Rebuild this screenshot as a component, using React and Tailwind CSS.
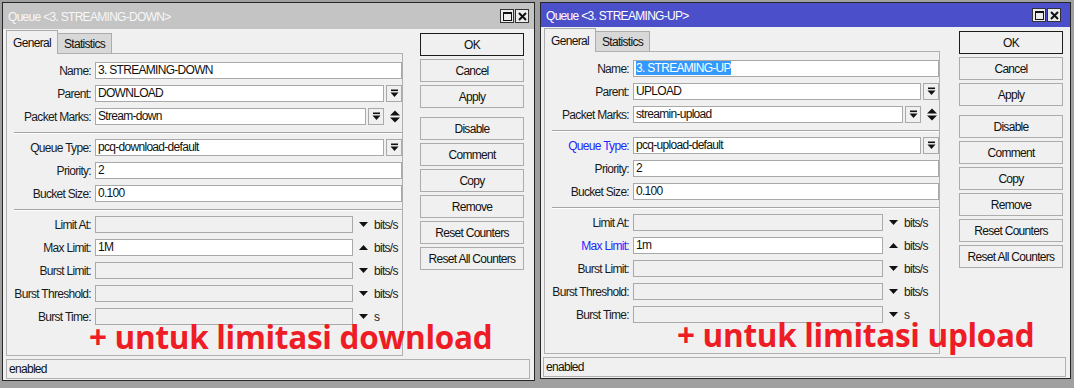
import React from "react";

function ComboIcon() {
  return (
    <svg width="9" height="9" viewBox="0 0 9 9">
      <rect x="1" y="0.5" width="7" height="1.6" fill="#111" />
      <polygon points="0.5,3.5 8.5,3.5 4.5,8" fill="#111" />
    </svg>
  );
}

function UpDownIcon() {
  return (
    <svg width="10" height="13" viewBox="0 0 10 13">
      <polygon points="0,5.5 10,5.5 5,0.5" fill="#111" />
      <polygon points="0,7.5 10,7.5 5,12.5" fill="#111" />
    </svg>
  );
}

function Tri({ up }) {
  return (
    <svg width="9" height="5" viewBox="0 0 9 5">
      {up ? <polygon points="0,5 9,5 4.5,0" fill="#111" /> : <polygon points="0,0 9,0 4.5,5" fill="#111" />}
    </svg>
  );
}

function Field({ value, disabled, selected }) {
  return (
    <div
      className={`h-[17px] min-w-0 flex-1 border border-[#a9a9a9] px-[2px] leading-[15px] text-[#111] ${
        disabled ? "bg-[#f0f0f0]" : "bg-white"
      }`}
    >
      {selected ? <span className="bg-[#3399ff] text-white">{value}</span> : value}
    </div>
  );
}

function ComboBtn() {
  return (
    <div className="ml-[2px] flex h-[17px] w-[16px] shrink-0 items-center justify-center border border-[#a9a9a9] bg-[#f0f0f0]">
      <ComboIcon />
    </div>
  );
}

function Row({ label, blue, children }) {
  return (
    <div className="flex h-[17px] items-center">
      <div className={`w-[88px] shrink-0 pr-[4px] text-right ${blue ? "text-[#2626ff]" : "text-[#1a1a1a]"}`}>{label}:</div>
      <div className="flex min-w-0 flex-1 items-center">{children}</div>
    </div>
  );
}

function Unit({ up, unit, w }) {
  return (
    <div className={`flex shrink-0 items-center pl-[6px] ${w}`}>
      <Tri up={up} />
      <span className="ml-[6px] text-[#1a1a1a]">{unit}</span>
    </div>
  );
}

function Sep() {
  return <div className="-mb-[1px] ml-[7px] mt-[1px] h-[2px] border-b border-t border-b-white border-t-[#a5a5a5]" />;
}

function Btn({ label, primary, extra }) {
  return (
    <div
      className={`flex h-[23px] w-[104px] items-center justify-center border bg-[#f0f0f0] text-[#111] ${
        primary ? "border-[#1c1c1c]" : "border-[#acacac]"
      } ${extra || ""}`}
    >
      {label}
    </div>
  );
}

function Window({ w }) {
  return (
    <div className={`relative flex shrink-0 flex-col border border-[#262626] bg-[#f0f0f0] ${w.size}`}>
      <div className={`flex shrink-0 items-center pl-[5px] ${w.titleCls}`}>
        <span className="pt-[1px]">{w.title}</span>
        <div className={`ml-auto flex gap-[1px] ${w.boxPr}`}>
          <div className="flex h-[14px] w-[14px] items-center justify-center border border-[#333] bg-[#ececec]">
            <div className="h-[9px] w-[9px] border border-t-2 border-[#111]" />
          </div>
          <div className="flex h-[14px] w-[14px] items-center justify-center border border-[#333] bg-[#ececec]">
            <svg width="9" height="9" viewBox="0 0 9 9">
              <path d="M1 1L8 8M8 1L1 8" stroke="#111" strokeWidth="2" />
            </svg>
          </div>
        </div>
      </div>

      <div className="flex min-h-0 flex-1 flex-col pb-[1px] pt-[1px]">
        <div className="flex min-h-0 flex-1 justify-between pl-[3px]">
          <div className={`flex flex-col ${w.colW}`}>
            <div className="flex h-[23px] items-end">
              <div className="relative z-10 -mb-[1px] flex h-[24px] w-[52px] items-center justify-center border border-b-0 border-[#acacac] bg-[#f0f0f0] text-[#111]">
                General
              </div>
              <div className="flex h-[20px] w-[54px] items-center justify-center border border-b-0 border-l-0 border-[#acacac] bg-[#d8d8d8] text-[#111]">
                Statistics
              </div>
            </div>
            <div className="flex flex-1 flex-col gap-[6px] border border-[#b0b0b0] pt-[8px]">
              <Row label="Name">
                <Field value={w.name} selected={w.selected} />
              </Row>
              <Row label="Parent">
                <Field value={w.parent} />
                <ComboBtn />
              </Row>
              <Row label="Packet Marks">
                <Field value={w.marks} />
                <ComboBtn />
                <div className="flex w-[18px] shrink-0 justify-center pl-[4px]">
                  <UpDownIcon />
                </div>
              </Row>
              <Sep />
              <Row label="Queue Type" blue={w.blue}>
                <Field value={w.qtype} />
                <ComboBtn />
              </Row>
              <Row label="Priority">
                <Field value="2" />
              </Row>
              <Row label="Bucket Size">
                <Field value="0.100" />
              </Row>
              <Sep />
              <Row label="Limit At">
                <Field disabled />
                <Unit unit="bits/s" w={w.unitW} />
              </Row>
              <Row label="Max Limit" blue={w.blue}>
                <Field value={w.max} />
                <Unit up unit="bits/s" w={w.unitW} />
              </Row>
              <Row label="Burst Limit">
                <Field disabled />
                <Unit unit="bits/s" w={w.unitW} />
              </Row>
              <Row label="Burst Threshold">
                <Field disabled />
                <Unit unit="bits/s" w={w.unitW} />
              </Row>
              <Row label="Burst Time">
                <Field disabled />
                <Unit unit="s" w={w.unitW} />
              </Row>
            </div>
          </div>

          <div className={`flex flex-col gap-[3px] pt-[3px] ${w.btnPr}`}>
            <Btn label="OK" primary />
            <Btn label="Cancel" />
            <Btn label="Apply" />
            <Btn label="Disable" extra="mt-[6px]" />
            <Btn label="Comment" />
            <Btn label="Copy" />
            <Btn label="Remove" />
            <Btn label="Reset Counters" />
            <Btn label="Reset All Counters" />
          </div>
        </div>

        <div className={`mt-[3px] h-[20px] shrink-0 border border-[#b0b0b0] pl-[2px] leading-[18px] text-[#111] ${w.statusM}`}>
          enabled
        </div>
      </div>

      <div className={`pointer-events-none absolute whitespace-nowrap font-['Open_Sans',sans-serif] text-[31.5px] font-bold leading-none tracking-[-0.3px] text-[#ee1c25] ${w.notePos}`}>
        {w.note}
      </div>
    </div>
  );
}

const down = {
  title: "Queue <3. STREAMING-DOWN>",
  size: "w-[533px] h-[379px]",
  titleCls: "h-[26px] bg-[#c4c4c4] text-[#f7f7f7]",
  boxPr: "pr-[5px]",
  colW: "w-[397px]",
  btnPr: "pr-[10px]",
  unitW: "w-[49px]",
  statusM: "ml-[3px] mr-[4px]",
  name: "3. STREAMING-DOWN",
  parent: "DOWNLOAD",
  marks: "Stream-down",
  qtype: "pcq-download-default",
  max: "1M",
  blue: false,
  selected: false,
  note: "+ untuk limitasi download",
  notePos: "left-[86px] top-[318px]",
};

const up = {
  title: "Queue <3. STREAMING-UP>",
  size: "w-[531px] h-[377px]",
  titleCls: "h-[24px] bg-[#4b4fca] text-white",
  boxPr: "pr-[9px]",
  colW: "w-[396px]",
  btnPr: "pr-[7px]",
  unitW: "w-[56px]",
  statusM: "ml-[2px] mr-[4px]",
  name: "3. STREAMING-UP",
  parent: "UPLOAD",
  marks: "streamin-upload",
  qtype: "pcq-upload-default",
  max: "1m",
  blue: true,
  selected: true,
  note: "+ untuk limitasi upload",
  notePos: "left-[136px] top-[316px]",
};

export default function App() {
  return (
    <div className="flex h-[388px] w-[1074px] items-start gap-[5px] overflow-hidden bg-[#a0a0a0] pl-[2px] pt-[2px] font-['Liberation_Sans',Arial,sans-serif] text-[12px] tracking-[-0.7px]">
      <Window w={down} />
      <Window w={up} />
    </div>
  );
}
